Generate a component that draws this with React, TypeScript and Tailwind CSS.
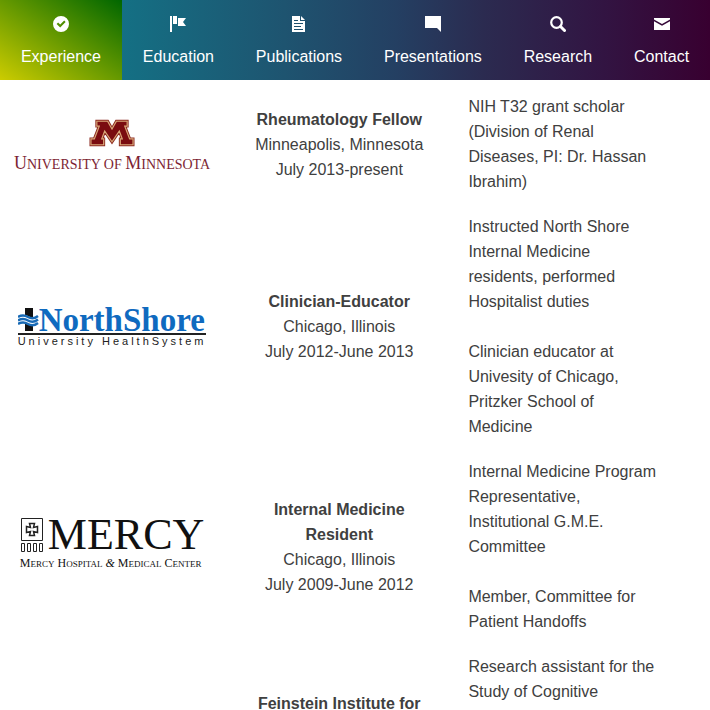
import React from "react";

const svgProps = { viewBox: "0 0 16 16", className: "h-4 w-4", "aria-hidden": true } as const;

const icons: Record<string, React.ReactNode> = {
  Experience: (
    <svg {...svgProps} fill="currentColor">
      <path fillRule="evenodd" d="M8 0a8 8 0 1 0 0 16A8 8 0 0 0 8 0Zm-.8 11.4L3.6 8l1.5-1.6 2.1 2 4-4L12.6 5.9Z" />
    </svg>
  ),
  Education: (
    <svg {...svgProps} fill="currentColor">
      <path d="M0 0h2v16H0ZM3 0h4v8H3ZM8 2h8l-3 4 3 4H8Z" />
    </svg>
  ),
  Publications: (
    <svg {...svgProps} fill="currentColor">
      <path fillRule="evenodd" d="M1 0h8v5h5v11H1ZM10 0l4 4h-4ZM3 4h4v1H3ZM3 7h9v1H3ZM3 10h7v1H3ZM3 13h9v1H3Z" />
    </svg>
  ),
  Presentations: (
    <svg {...svgProps} fill="currentColor">
      <path d="M0 0h16v16l-4-4H0Z" />
    </svg>
  ),
  Research: (
    <svg {...svgProps} fill="none" stroke="currentColor">
      <circle cx="6.5" cy="6.5" r="5.3" strokeWidth="2.2" />
      <path d="m10.500 10.500 4 4" strokeWidth="3" strokeLinecap="round" />
    </svg>
  ),
  Contact: (
    <svg {...svgProps} fill="currentColor">
      <path d="M0 2h16v1.500L8 8 0 3.500ZM0 5.200l8 4.500 8-4.500V14H0Z" />
    </svg>
  ),
};

const sections = ["Experience", "Education", "Publications", "Presentations", "Research", "Contact"];

const blockM =
  "M8 2h11l4.500 8L28 2h11v5h-2.500l5 13H45v6H32v-6h2l-3-8-7.500 11L16 12l-3 8h2v6H2v-6h3.500l5-13H8Z";

function MinnesotaLogo() {
  return (
    <div className="flex flex-col items-center pt-2 font-['Liberation_Serif',serif] text-[#7d1f33]">
      <svg viewBox="0 0 47 28" className="h-7 w-[46px]" aria-hidden="true">
        <path d={blockM} fill="#7a0c10" stroke="#8c2a20" strokeWidth="3" />
        <path d={blockM} fill="#7a0c10" stroke="#d9a878" strokeWidth="1.200" />
      </svg>
      <div className="whitespace-nowrap pt-1 text-[18px] leading-6">
        U<span className="text-[14px]">NIVERSITY OF </span>M<span className="text-[14px]">INNESOTA</span>
      </div>
    </div>
  );
}

function NorthShoreLogo() {
  return (
    <div>
      <div className="flex h-7 items-center border-b-2 border-[#222]">
        <svg viewBox="0 0 21 24" className="h-6 w-[21px] shrink-0" aria-hidden="true">
          <path d="M7 0h8v23H7Z" fill="#111" />
          <path d="M0 8q5-3 10 0t10-1v9q-5 2-10 0t-10 0Z" fill="#fff" />
          <path
            d="M0 9q5-3 10 0t10-1M0 12.500q5-3 10 0t10-1M0 16q5-3 10 0t10-1"
            fill="none"
            stroke="#1769b5"
            strokeWidth="2.400"
          />
        </svg>
        <span className="font-['Liberation_Serif',serif] text-[33px] leading-7 font-bold text-[#0f6abf]">NorthShore</span>
      </div>
      <div className="whitespace-nowrap text-[11px] leading-3 tracking-[3px] text-[#222]">University HealthSystem</div>
    </div>
  );
}

function MercyLogo() {
  return (
    <div className="pb-1.5 font-['Liberation_Serif',serif] text-[#111]">
      <div className="flex items-center gap-1">
        <svg viewBox="0 0 24 36" className="h-9 w-6 shrink-0" fill="none" stroke="#222" aria-hidden="true">
          <path d="M1.500 1.500h21v22h-21Z" />
          <path d="M9.500 6.500h5l-1 4 4-1v6l-4-1 1 4h-5l1-4-4 1v-6l4 1Z" strokeWidth="1.500" />
          <path d="M1.500 26.500h3v8h-3ZM7.500 26.500h3v8h-3ZM13.500 26.500h3v8h-3ZM19.500 26.500h3v8h-3Z" />
        </svg>
        <span className="text-[44px] leading-10">MERCY</span>
      </div>
      <div className="whitespace-nowrap text-[12px] leading-4">
        M<span className="text-[9px]">ERCY</span> H<span className="text-[9px]">OSPITAL</span> <i>&amp;</i> M
        <span className="text-[9px]">EDICAL</span> C<span className="text-[9px]">ENTER</span>
      </div>
    </div>
  );
}

const jobs = [
  {
    logo: <MinnesotaLogo />,
    title: "Rheumatology Fellow",
    place: "Minneapolis, Minnesota",
    dates: "July 2013-present",
    notes: ["NIH T32 grant scholar (Division of Renal Diseases, PI: Dr. Hassan Ibrahim)"],
  },
  {
    logo: <NorthShoreLogo />,
    title: "Clinician-Educator",
    place: "Chicago, Illinois",
    dates: "July 2012-June 2013",
    notes: [
      "Instructed North Shore Internal Medicine residents, performed Hospitalist duties",
      "Clinician educator at Univesity of Chicago, Pritzker School of Medicine",
    ],
  },
  {
    logo: <MercyLogo />,
    title: "Internal Medicine Resident",
    place: "Chicago, Illinois",
    dates: "July 2009-June 2012",
    notes: [
      "Internal Medicine Program Representative, Institutional G.M.E. Committee",
      "Member, Committee for Patient Handoffs",
    ],
  },
];

export default function App() {
  return (
    <div className="min-h-screen bg-white font-['Liberation_Sans',Arial,sans-serif] text-base leading-[25px] text-[#404040]">
      <nav className="flex h-20 bg-[linear-gradient(90deg,#108088_0%,#147084_17%,#1e5470_40%,#243f62_56%,#2b2b50_68%,#321442_85%,#380030_100%)] text-white">
        {sections.map((name, i) => (
          <a
            key={name}
            href={`#${name.toLowerCase()}`}
            className={`flex flex-auto flex-col items-center gap-3 px-5 pt-4 ${
              i === 0 ? "bg-[linear-gradient(to_top_right,#cccc00,#006600)]" : ""
            }`}
          >
            {icons[name]}
            <span>{name}</span>
          </a>
        ))}
      </nav>
      <table className="mt-1 w-full table-fixed">
        <colgroup>
          <col className="w-[31%]" />
          <col className="w-[33%]" />
          <col className="w-[36%]" />
        </colgroup>
        <tbody>
          {jobs.map((job) => (
            <tr key={job.title}>
              <td className="py-[10px] pr-2 pl-3 align-middle">
                <div className="flex justify-center">{job.logo}</div>
              </td>
              <td className="py-[10px] pr-6 pl-7 text-center align-middle">
                <strong className="block">{job.title}</strong>
                {job.place}
                <br />
                {job.dates}
              </td>
              <td className="py-[10px] pr-12 pl-[14px] align-middle">
                {job.notes.map((note) => (
                  <p key={note} className="mb-[25px] last:mb-0">
                    {note}
                  </p>
                ))}
              </td>
            </tr>
          ))}
          <tr>
            <td />
            <td className="pt-[47px] pr-6 pl-7 text-center align-top">
              <strong className="block">Feinstein Institute for</strong>
            </td>
            <td className="pt-[10px] pr-12 pl-[14px] align-top">Research assistant for the Study of Cognitive</td>
          </tr>
        </tbody>
      </table>
    </div>
  );
}
